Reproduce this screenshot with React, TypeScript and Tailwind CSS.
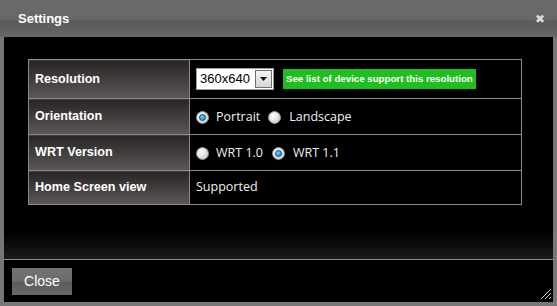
import React, { useState } from 'react';

const Radio: React.FC<{ checked: boolean; onClick: () => void }> = ({ checked, onClick }) => (
    <span
        onClick={onClick}
        className="inline-flex w-[13px] h-[13px] rounded-full border border-[#8a8a8a] bg-[radial-gradient(circle_at_40%_35%,#ffffff,#c4c4c4)] items-center justify-center cursor-pointer"
    >
        {checked && (
            <span className="w-[7px] h-[7px] rounded-full bg-[radial-gradient(circle_at_40%_35%,#7fd0ff,#1670b8)] border border-[#0d4f86]" />
        )}
    </span>
);

const labelCell = "w-[161px] px-[6px] bg-gradient-to-b from-[#282525] to-[#5e5857] text-white font-bold text-[12.6px] border border-[#8a8a8a]";
const valueCell = "px-[6px] border border-[#8a8a8a] text-[#f0f0f0] text-[12.5px]";

const App: React.FC = () => {
    const [orientation, setOrientation] = useState<'portrait' | 'landscape'>('portrait');
    const [wrt, setWrt] = useState<'1.0' | '1.1'>('1.1');

    return (
        <div className="w-[557px] h-[306px] bg-[#777777] p-[4px] pt-0 flex flex-col" style={{ fontFamily: '"Open Sans", sans-serif' }}>
            {/* title bar */}
            <div className="h-[37px] -mx-[4px] flex items-center justify-between px-[18px] pr-[12px] bg-[linear-gradient(to_bottom,#6a6a6a_0%,#686868_52%,#5a5a5a_56%,#666666_100%)]">
                <span className="text-white font-bold text-[13px]" style={{ fontFamily: '"Liberation Sans", sans-serif' }}>Settings</span>
                <span className="text-[#dcdcdc] text-[12px] font-bold leading-none" style={{ fontFamily: '"DejaVu Sans", sans-serif' }}>✖</span>
            </div>

            {/* content */}
            <div className="h-[223px] bg-[linear-gradient(to_bottom,#000000_0%,#000000_88%,#1b1b1b_100%)] px-[24px] pt-[22px] border-b border-[#8a8a8a]">
                <table className="w-[494px] border-collapse" style={{ fontFamily: '"Liberation Sans", sans-serif' }}>
                    <tbody>
                        <tr className="h-[39px]">
                            <td className={labelCell}>Resolution</td>
                            <td className={valueCell}>
                                <div className="flex items-center gap-[9px]">
                                    <div className="w-[78px] h-[22px] bg-white border border-[#a0a0a0] flex items-center justify-between pl-[3px] pr-[1px]">
                                        <span className="text-black text-[13px]">360x640</span>
                                        <span className="w-[17px] h-[18px] border border-[#707070] bg-gradient-to-b from-[#f4f4f4] to-[#d6d6d6] flex items-center justify-center">
                                            <svg width="7" height="4" viewBox="0 0 7 4"><path d="M0 0h7L3.5 4z" fill="#111" /></svg>
                                        </span>
                                    </div>
                                    <span className="h-[20px] px-[3px] bg-[#1fbf1f] text-white font-bold text-[9.7px] flex items-center whitespace-nowrap">
                                        See list of device support this resolution
                                    </span>
                                </div>
                            </td>
                        </tr>
                        <tr className="h-[36px]">
                            <td className={labelCell}>Orientation</td>
                            <td className={valueCell} style={{ fontFamily: '"Open Sans", sans-serif' }}>
                                <div className="flex items-center pt-[1px]">
                                    <Radio checked={orientation === 'portrait'} onClick={() => setOrientation('portrait')} />
                                    <span className="ml-[7px] mr-[8px]">Portrait</span>
                                    <Radio checked={orientation === 'landscape'} onClick={() => setOrientation('landscape')} />
                                    <span className="ml-[8px]">Landscape</span>
                                </div>
                            </td>
                        </tr>
                        <tr className="h-[36px]">
                            <td className={labelCell}>WRT Version</td>
                            <td className={valueCell} style={{ fontFamily: '"Open Sans", sans-serif' }}>
                                <div className="flex items-center pt-[1px]">
                                    <Radio checked={wrt === '1.0'} onClick={() => setWrt('1.0')} />
                                    <span className="ml-[7px] mr-[9px]">WRT 1.0</span>
                                    <Radio checked={wrt === '1.1'} onClick={() => setWrt('1.1')} />
                                    <span className="ml-[8px]">WRT 1.1</span>
                                </div>
                            </td>
                        </tr>
                        <tr className="h-[34px]">
                            <td className={labelCell}>Home Screen view</td>
                            <td className={valueCell} style={{ fontFamily: '"Open Sans", sans-serif' }}>Supported</td>
                        </tr>
                    </tbody>
                </table>
            </div>

            {/* footer */}
            <div className="flex-1 bg-black relative px-[8px] pt-[8px]">
                <button
                    type="button"
                    className="w-[60px] h-[27px] text-white text-[14px] bg-[linear-gradient(to_bottom,#727272_0%,#6c6c6c_48%,#5c5c5c_52%,#686868_100%)]"
                    style={{ fontFamily: '"Liberation Sans", sans-serif' }}
                >
                    Close
                </button>
                <svg className="absolute right-[2px] bottom-[3px]" width="11" height="11" viewBox="0 0 11 11">
                    <path d="M1 11L11 1M5 11L11 5M9 11L11 9" stroke="#d0d0d0" strokeWidth="1" />
                </svg>
            </div>
        </div>
    );
};

export default App;
